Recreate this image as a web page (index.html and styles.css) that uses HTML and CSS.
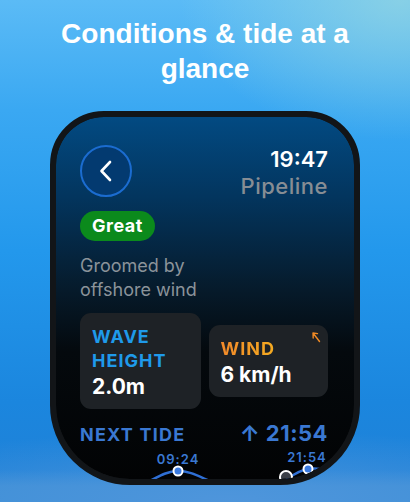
FILE: index.html
```html
<!DOCTYPE html>
<html lang="en">
<head>
    <meta charset="UTF-8">
    <title>Surf watch</title>
    <link rel="stylesheet" href="styles.css">
</head>
<body>
    <h1 class="headline">Conditions &amp; tide at a glance</h1>

    <div class="watch">
        <div class="screen">
            <div class="top-row">
                <button class="back-btn" aria-label="Back">
                    <svg width="16" height="22" viewBox="0 0 16 22">
                        <path d="M12 2 L3.5 11 L12 20" fill="none" stroke="#fff" stroke-width="2.6" stroke-linecap="round" stroke-linejoin="round"/>
                    </svg>
                </button>
                <div class="clock">
                    <div class="time">19:47</div>
                    <div class="spot">Pipeline</div>
                </div>
            </div>

            <span class="rating">Great</span>
            <p class="summary">Groomed by offshore wind</p>

            <div class="cards">
                <div class="card wave">
                    <div class="card-label">WAVE HEIGHT</div>
                    <div class="card-value">2.0m</div>
                </div>
                <div class="card wind">
                    <svg class="wind-dir" width="10" height="12" viewBox="0 0 10 12">
                        <path d="M8.5 10.5 L2 2 M2 2 L2.2 7 M2 2 L6.5 2.6" fill="none" stroke="#f08a24" stroke-width="1.4" stroke-linecap="round"/>
                    </svg>
                    <div class="card-label">WIND</div>
                    <div class="card-value">6 km/h</div>
                </div>
            </div>

            <div class="tide-row">
                <span class="tide-label">NEXT TIDE</span>
                <span class="tide-time">&#8593; 21:54</span>
            </div>

            <svg class="tide-chart" width="298" height="32" viewBox="0 0 298 32">
                <text x="122" y="15" class="tide-mark">09:24</text>
                <text x="251" y="13" class="tide-mark">21:54</text>
                <path d="M90 34 C105 26 112 22 122 22 C134 22 142 27 156 33" fill="none" stroke="#2f6fd4" stroke-width="2.5"/>
                <path d="M226 34 C236 26 244 21 252 20 C258 19 262 19 270 21" fill="none" stroke="#2f6fd4" stroke-width="2.5"/>
                <circle cx="122" cy="22" r="4.5" fill="#3b7be0" stroke="#fff" stroke-width="2"/>
                <circle cx="252" cy="20" r="4.5" fill="#3b7be0" stroke="#fff" stroke-width="2"/>
                <circle cx="230" cy="28" r="6" fill="#3b3f47" stroke="#fff" stroke-width="2"/>
            </svg>
        </div>
    </div>
</body>
</html>
```

FILE: styles.css
```css
body {
    margin: 0;
    height: 502px;
    overflow: hidden;
    font-family: 'Inter', 'Noto Sans', sans-serif;
    background:
        radial-gradient(ellipse 220px 140px at 400px 0px, rgba(150, 215, 225, 0.75), transparent),
        radial-gradient(ellipse 420px 70px at 230px 500px, rgba(80, 150, 220, 0.9), transparent),
        linear-gradient(180deg, transparent 0, transparent 470px, #3d8fd6 486px),
        linear-gradient(180deg, #5bbbf6 0%, #3aa8f2 22%, #2398ec 50%, #1b86de 80%, #2080d6 100%);
}

.headline {
    margin: 0;
    padding: 16px 40px 0;
    font-family: 'Liberation Sans', Arial, sans-serif;
    font-size: 28px;
    line-height: 35px;
    font-weight: bold;
    color: #ffffff;
    text-align: center;
}

.watch {
    width: 298px;
    height: 362px;
    margin: 25px 0 0 50px;
    border: 6px solid #121518;
    border-radius: 54px 54px 80px 80px;
    overflow: hidden;
    background: #121518;
}

.screen {
    height: 100%;
    box-sizing: border-box;
    padding: 28px 26px 0 24px;
    border-radius: 48px 48px 74px 74px;
    overflow: hidden;
    background: linear-gradient(180deg, #024a82 0%, #03355e 22%, #061a2a 48%, #04090d 65%, #020304 100%);
}

.top-row {
    display: flex;
    justify-content: space-between;
    align-items: flex-start;
}

.back-btn {
    width: 52px;
    height: 52px;
    border-radius: 50%;
    border: 2px solid #1b6cd0;
    background: #033a70;
    display: flex;
    align-items: center;
    justify-content: center;
    padding: 0;
}

.clock {
    text-align: right;
    padding-top: 1px;
}

.time {
    color: #ffffff;
    font-size: 22px;
    font-weight: 600;
    line-height: 26px;
}

.spot {
    color: #878d94;
    font-size: 22px;
    font-weight: 500;
    line-height: 28px;
    letter-spacing: 0.5px;
}

.rating {
    display: inline-block;
    margin-top: 11px;
    height: 30px;
    line-height: 30px;
    padding: 0 12px;
    border-radius: 15px;
    background: #0b8a1c;
    color: #ffffff;
    font-size: 18px;
    font-weight: 700;
    letter-spacing: 0.5px;
}

.summary {
    margin: 13px 0 0;
    width: 150px;
    color: #8b939a;
    font-size: 18px;
    line-height: 24px;
}

.cards {
    display: flex;
    align-items: center;
    gap: 8px;
    margin-top: 11px;
}

.card {
    position: relative;
    box-sizing: border-box;
    background: #1e2226;
    border-radius: 11px;
    padding: 12px 12px;
}

.card.wave {
    width: 121px;
    height: 96px;
}

.card.wind {
    width: 120px;
    height: 72px;
    padding-top: 12px;
}

.card-label {
    font-size: 18px;
    line-height: 24px;
    font-weight: 700;
    letter-spacing: 1px;
    color: #1f9aea;
}

.wind .card-label {
    background: linear-gradient(90deg, #f28a2a, #f7c51a);
    -webkit-background-clip: text;
    background-clip: text;
    color: transparent;
}

.card-value {
    color: #ffffff;
    font-size: 21px;
    line-height: 28px;
    font-weight: 700;
}

.wind-dir {
    position: absolute;
    top: 6px;
    right: 7px;
}

.tide-row {
    display: flex;
    justify-content: space-between;
    align-items: baseline;
    margin-top: 11px;
    color: #3a78d2;
    font-weight: 700;
}

.tide-label {
    font-size: 18px;
    letter-spacing: 1.2px;
}

.tide-time {
    font-size: 22px;
    letter-spacing: 0.5px;
}

.tide-chart {
    display: block;
    margin: 3px 0 0 -24px;
}

.tide-mark {
    fill: #3a78d2;
    font-family: 'Inter', 'Noto Sans', sans-serif;
    font-size: 13px;
    font-weight: 600;
    letter-spacing: 1px;
    text-anchor: middle;
}
```
